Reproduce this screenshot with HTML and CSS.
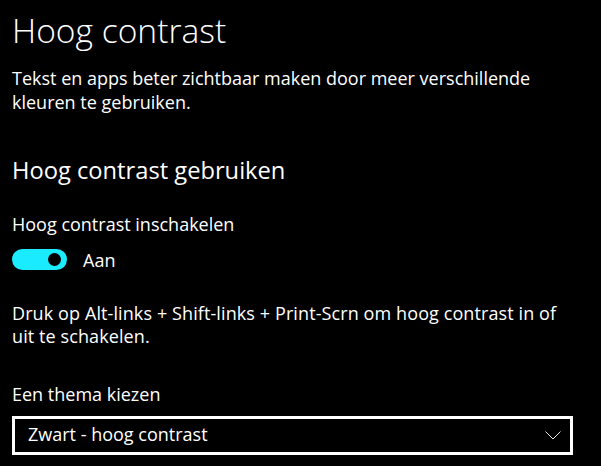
FILE: index.html
```html
<!DOCTYPE html>
<html lang="nl">
<head>
  <meta charset="UTF-8">
  <meta name="viewport" content="width=device-width, initial-scale=1.0">
  <title>Hoog contrast</title>
  <link rel="stylesheet" href="styles.css">
</head>
<body>
  <main class="page">
    <h1 class="page-title">Hoog contrast</h1>
    <p class="text intro">Tekst en apps beter zichtbaar maken door meer verschillende<br>kleuren te gebruiken.</p>

    <h2 class="section-title">Hoog contrast gebruiken</h2>

    <p class="text label">Hoog contrast inschakelen</p>
    <div class="toggle-row">
      <span class="toggle"><span class="knob"></span></span>
      <span class="text">Aan</span>
    </div>

    <p class="text hint">Druk op Alt-links + Shift-links + Print-Scrn om hoog contrast in of<br>uit te schakelen.</p>

    <p class="text label theme-label">Een thema kiezen</p>
    <div class="dropdown">
      <span class="text">Zwart - hoog contrast</span>
      <svg class="chevron" width="16" height="9" viewBox="0 0 16 9">
        <polyline points="0.5,0.5 8,8 15.5,0.5" fill="none" stroke="#e6e6e6" stroke-width="1"/>
      </svg>
    </div>
  </main>
</body>
</html>
```

FILE: styles.css
```css
* {
  margin: 0;
  padding: 0;
  box-sizing: border-box;
}

body {
  font-family: "Open Sans", "Noto Sans", sans-serif;
  background-color: #000;
  color: #fff;
}

.page {
  padding: 6px 0 0 12px;
}

.page-title {
  font-size: 33.6px;
  font-weight: 300;
  line-height: 48px;
}

.text {
  font-size: 18px;
  line-height: 23.5px;
}

.intro {
  margin-top: 13px;
}

.section-title {
  font-size: 23.7px;
  font-weight: 400;
  line-height: 32px;
  margin-top: 39.5px;
}

.label {
  margin-top: 27px;
}

.toggle-row {
  display: flex;
  align-items: flex-start;
  gap: 16px;
  margin-top: 12.5px;
}

.toggle {
  display: flex;
  align-items: center;
  justify-content: flex-end;
  width: 55px;
  height: 21px;
  padding-right: 6px;
  border-radius: 11px;
  background-color: #1aebff;
}

.knob {
  width: 13px;
  height: 13px;
  border-radius: 50%;
  background-color: #000;
}

.hint {
  margin-top: 29.5px;
  letter-spacing: 0.1px;
}

.theme-label {
  margin-top: 34px;
}

.dropdown {
  display: flex;
  align-items: center;
  justify-content: space-between;
  width: 561px;
  height: 39px;
  margin-top: 9.5px;
  padding: 0 9px 0 13px;
  border: 3px solid #fff;
}

.chevron {
  display: block;
}
```
